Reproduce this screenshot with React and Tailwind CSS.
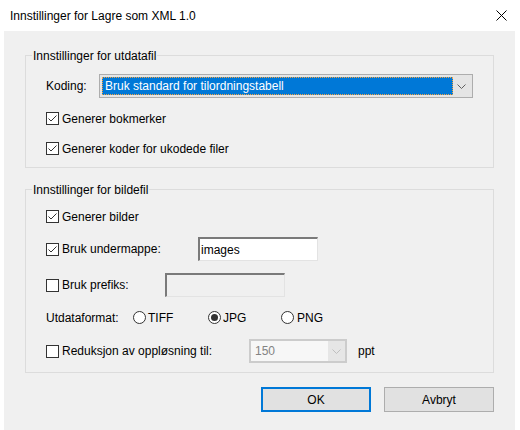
import React from "react";

const CheckBox = ({ checked }) => (
  <div className="w-[13px] h-[13px] border border-[#333333] bg-white shrink-0 flex items-center justify-center">
    {checked && (
      <svg width="11" height="11" viewBox="0 0 11 11">
        <path d="M1.5 5.5 L4 8 L9.5 2.5" stroke="#333333" strokeWidth="1" fill="none" />
      </svg>
    )}
  </div>
);

const Radio = ({ checked }) => (
  <svg width="13" height="13" viewBox="0 0 13 13" className="shrink-0">
    <circle cx="6.5" cy="6.5" r="6" fill="white" stroke="#333333" strokeWidth="1" />
    {checked && <circle cx="6.5" cy="6.5" r="3.5" fill="#333333" />}
  </svg>
);

const Chevron = ({ color }) => (
  <svg width="9" height="5" viewBox="0 0 9 5">
    <path d="M0.5 0.5 L4.5 4.5 L8.5 0.5" stroke={color} strokeWidth="1" fill="none" />
  </svg>
);

const CheckRow = ({ checked, label, className }) => (
  <div className={"flex items-center h-[19px] " + className}>
    <CheckBox checked={checked} />
    <span className="ml-[3px]">{label}</span>
  </div>
);

const Group = ({ title, className, children }) => (
  <div className={"border border-[#dcdcdc] pb-[9px] " + className}>
    <div className="-mt-[8px] ml-[6px] w-fit px-[1px] h-[16px] leading-[16px] bg-[#f0f0f0]">
      {title}
    </div>
    <div className="px-[20px]">{children}</div>
  </div>
);

const App = () => {
  return (
    <div className="w-[520px] h-[430px] bg-white flex flex-col font-['Liberation_Sans',Arial,sans-serif] text-[12px] text-black leading-none">
      <div className="h-[31px] shrink-0 flex items-center pl-[10px] pr-[13px]">
        <span className="flex-1">Innstillinger for Lagre som XML 1.0</span>
        <svg width="11" height="11" viewBox="0 0 11 11">
          <path d="M0.5 0.5 L10.5 10.5 M10.5 0.5 L0.5 10.5" stroke="#000000" strokeWidth="1" />
        </svg>
      </div>

      <div className="flex-1 bg-[#f0f0f0] ml-[4px] mr-[5px] px-[21px] pt-[24px]">
        <Group title="Innstillinger for utdatafil">
          <div className="mt-[10px] flex items-center h-[24px]">
            <span className="w-[53px]">Koding:</span>
            <div className="w-[374px] h-[24px] border border-[#adadad] bg-[#e5e5e5] p-[2px] flex">
              <div className="w-[351px] h-full bg-[#0078d7] border border-dotted border-[#f4a340] text-white flex items-center pl-[2px]">
                Bruk standard for tilordningstabell
              </div>
              <div className="flex-1 flex items-center justify-center">
                <Chevron color="#606060" />
              </div>
            </div>
          </div>
          <CheckRow checked label="Generer bokmerker" className="mt-[11px]" />
          <CheckRow checked label="Generer koder for ukodede filer" className="mt-[11px]" />
        </Group>

        <Group title="Innstillinger for bildefil" className="mt-[21px]">
          <CheckRow checked label="Generer bilder" className="mt-[9px]" />

          <div className="mt-[11px] flex items-center h-[24px]">
            <div className="w-[152px] flex items-center">
              <CheckBox checked />
              <span className="ml-[3px]">Bruk undermappe:</span>
            </div>
            <div className="w-[120px] h-[24px] bg-white border-t-2 border-l-2 border-t-[#7a7a7a] border-l-[#7a7a7a] border-b border-r border-b-[#e3e3e3] border-r-[#e3e3e3] flex items-center pl-[1px]">
              images
            </div>
          </div>

          <div className="mt-[12px] flex items-center h-[24px]">
            <div className="w-[119px] flex items-center">
              <CheckBox />
              <span className="ml-[3px]">Bruk prefiks:</span>
            </div>
            <div className="w-[120px] h-[24px] bg-[#f0f0f0] border-t-2 border-l-2 border-t-[#7a7a7a] border-l-[#7a7a7a] border-b border-r border-b-[#e3e3e3] border-r-[#e3e3e3]" />
          </div>

          <div className="mt-[11px] flex items-center h-[19px]">
            <span className="w-[87px]">Utdataformat:</span>
            <div className="w-[75px] flex items-center">
              <Radio />
              <span className="ml-[2px]">TIFF</span>
            </div>
            <div className="w-[73px] flex items-center">
              <Radio checked />
              <span className="ml-[2px]">JPG</span>
            </div>
            <div className="flex items-center">
              <Radio />
              <span className="ml-[3px]">PNG</span>
            </div>
          </div>

          <div className="mt-[12px] flex items-center h-[24px]">
            <div className="w-[203px] flex items-center">
              <CheckBox />
              <span className="ml-[3px]">Reduksjon av oppløsning til:</span>
            </div>
            <div className="w-[98px] h-[24px] border border-[#cccccc] bg-[#cccccc] p-[1px] flex">
              <div className="w-[77px] h-full bg-[#f7f7f7] text-[#838383] flex items-center pl-[4px]">
                150
              </div>
              <div className="flex-1 bg-[#e6e6e6] flex items-center justify-center">
                <Chevron color="#bfbfbf" />
              </div>
            </div>
            <span className="ml-[11px]">ppt</span>
          </div>
        </Group>

        <div className="mt-[14px] flex justify-end gap-[13px]">
          <button className="w-[110px] h-[25px] bg-[#e1e1e1] border-2 border-[#0078d7]">OK</button>
          <button className="w-[110px] h-[25px] bg-[#e1e1e1] border border-[#adadad]">Avbryt</button>
        </div>
      </div>
    </div>
  );
};

export default App;
